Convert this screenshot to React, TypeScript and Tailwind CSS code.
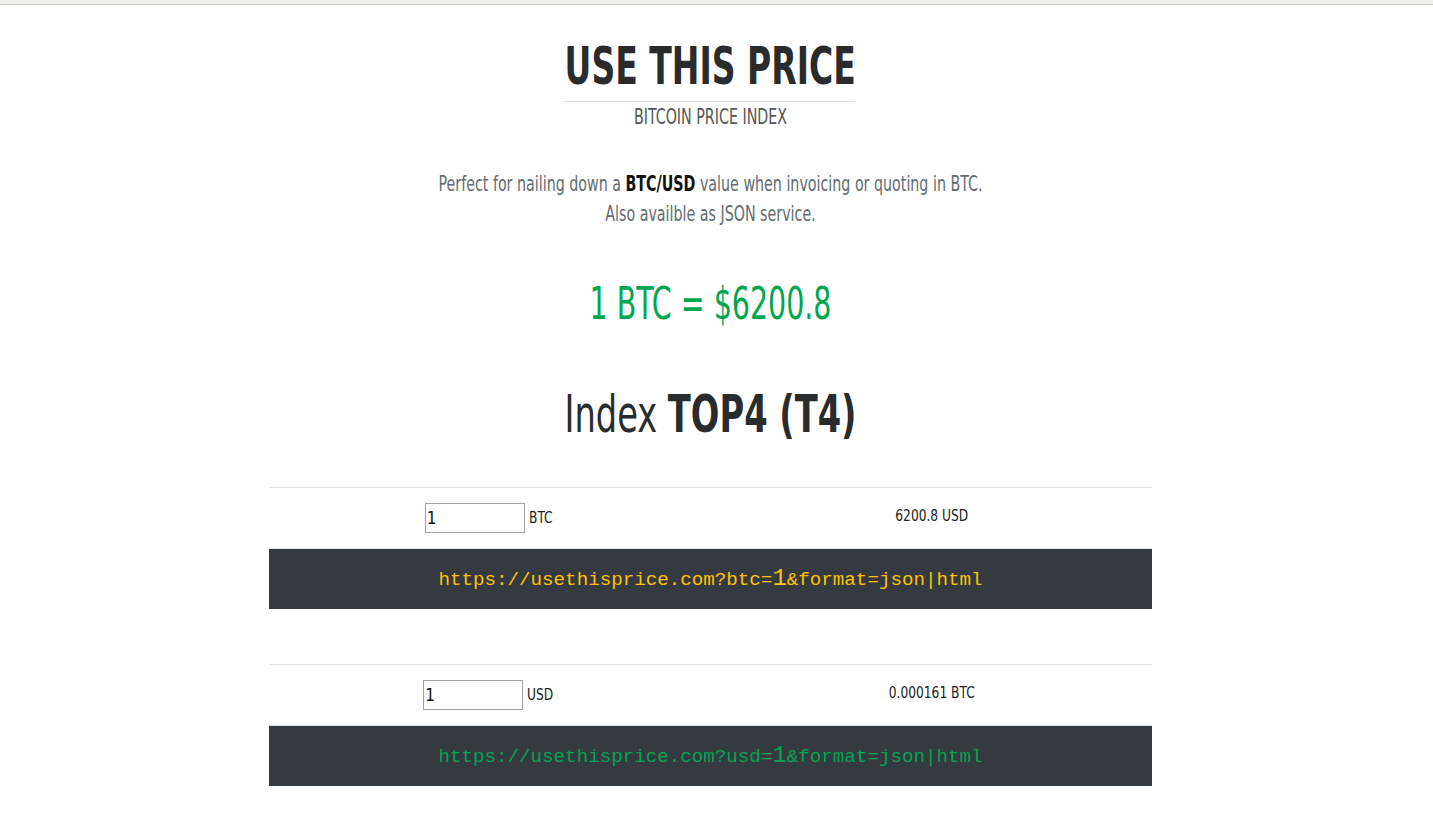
import React from "react";

const sans = '"DejaVu Sans Condensed", "DejaVu Sans", sans-serif';
const mono = '"Liberation Mono", "DejaVu Sans Mono", monospace';

function Converter({ unit, result, param, color }: { unit: string; result: string; param: string; color: string }) {
  return (
    <div className="border-t border-[#dee2e6]">
      <div className="grid h-[60px] grid-cols-2 items-center">
        <div className="flex items-center justify-center pl-[2px]">
          <input
            defaultValue="1"
            className="h-[30px] w-[100px] border border-[#a0a0a0] px-[1px] text-[17px] text-[#111] outline-none"
          />
          <span className="ml-[4px] inline-block origin-left scale-x-[0.85] text-[16px] text-[#222]">{unit}</span>
        </div>
        <div className="-mt-[4px] scale-x-[0.85] text-center text-[16px] text-[#222]">{result}</div>
      </div>
      <div
        className={`flex h-[61px] items-center justify-center border-t border-[#dee2e6] bg-[#343a40] text-[19.2px] ${color}`}
        style={{ fontFamily: mono }}
      >
        <span>
          https://usethisprice.com?{param}=<span className="text-[24px]">1</span>&amp;format=json|html
        </span>
      </div>
    </div>
  );
}

export default function App() {
  return (
    <div className="min-h-screen bg-white" style={{ fontFamily: sans }}>
      <div className="h-[5px] border-b border-[#cfcdca] bg-[#f0efed]" />

      <div className="pr-[12px]">
        <header className="pt-[27px] text-center">
          <h1 className="inline-flex h-[70px] scale-x-[0.72] items-center border-b border-[#dddddd] text-[51px] font-bold leading-none text-[#292b2c]">
            USE THIS PRICE
          </h1>
          <div className="flex h-[28px] scale-x-[0.72] items-center justify-center text-[22px] text-[#555]">
            BITCOIN PRICE INDEX
          </div>
        </header>

        <p className="mt-[39px] scale-x-[0.72] text-center text-[22px] leading-[30px] text-[#636c72]">
          Perfect for nailing down a <b className="text-[#111]">BTC/USD</b> value when invoicing or quoting in BTC.
          <br />
          Also availble as JSON service.
        </p>

        <div className="mt-[45px] flex h-[60px] scale-x-[0.72] items-center justify-center text-[44px] text-[#00a650]">
          1 BTC = $6200.8
        </div>

        <h2 className="mt-[45px] flex h-[70px] scale-x-[0.72] items-center justify-center text-[52px] text-[#292b2c]">
          Index&nbsp;<b>TOP4 (T4)</b>
        </h2>

        <div className="mx-auto mt-[38px] w-[883px] pb-[40px]">
          <Converter unit="BTC" result="6200.8 USD" param="btc" color="text-[#ffc107]" />
          <div className="h-[55px]" />
          <Converter unit="USD" result="0.000161 BTC" param="usd" color="text-[#00a650]" />
        </div>
      </div>
    </div>
  );
}
